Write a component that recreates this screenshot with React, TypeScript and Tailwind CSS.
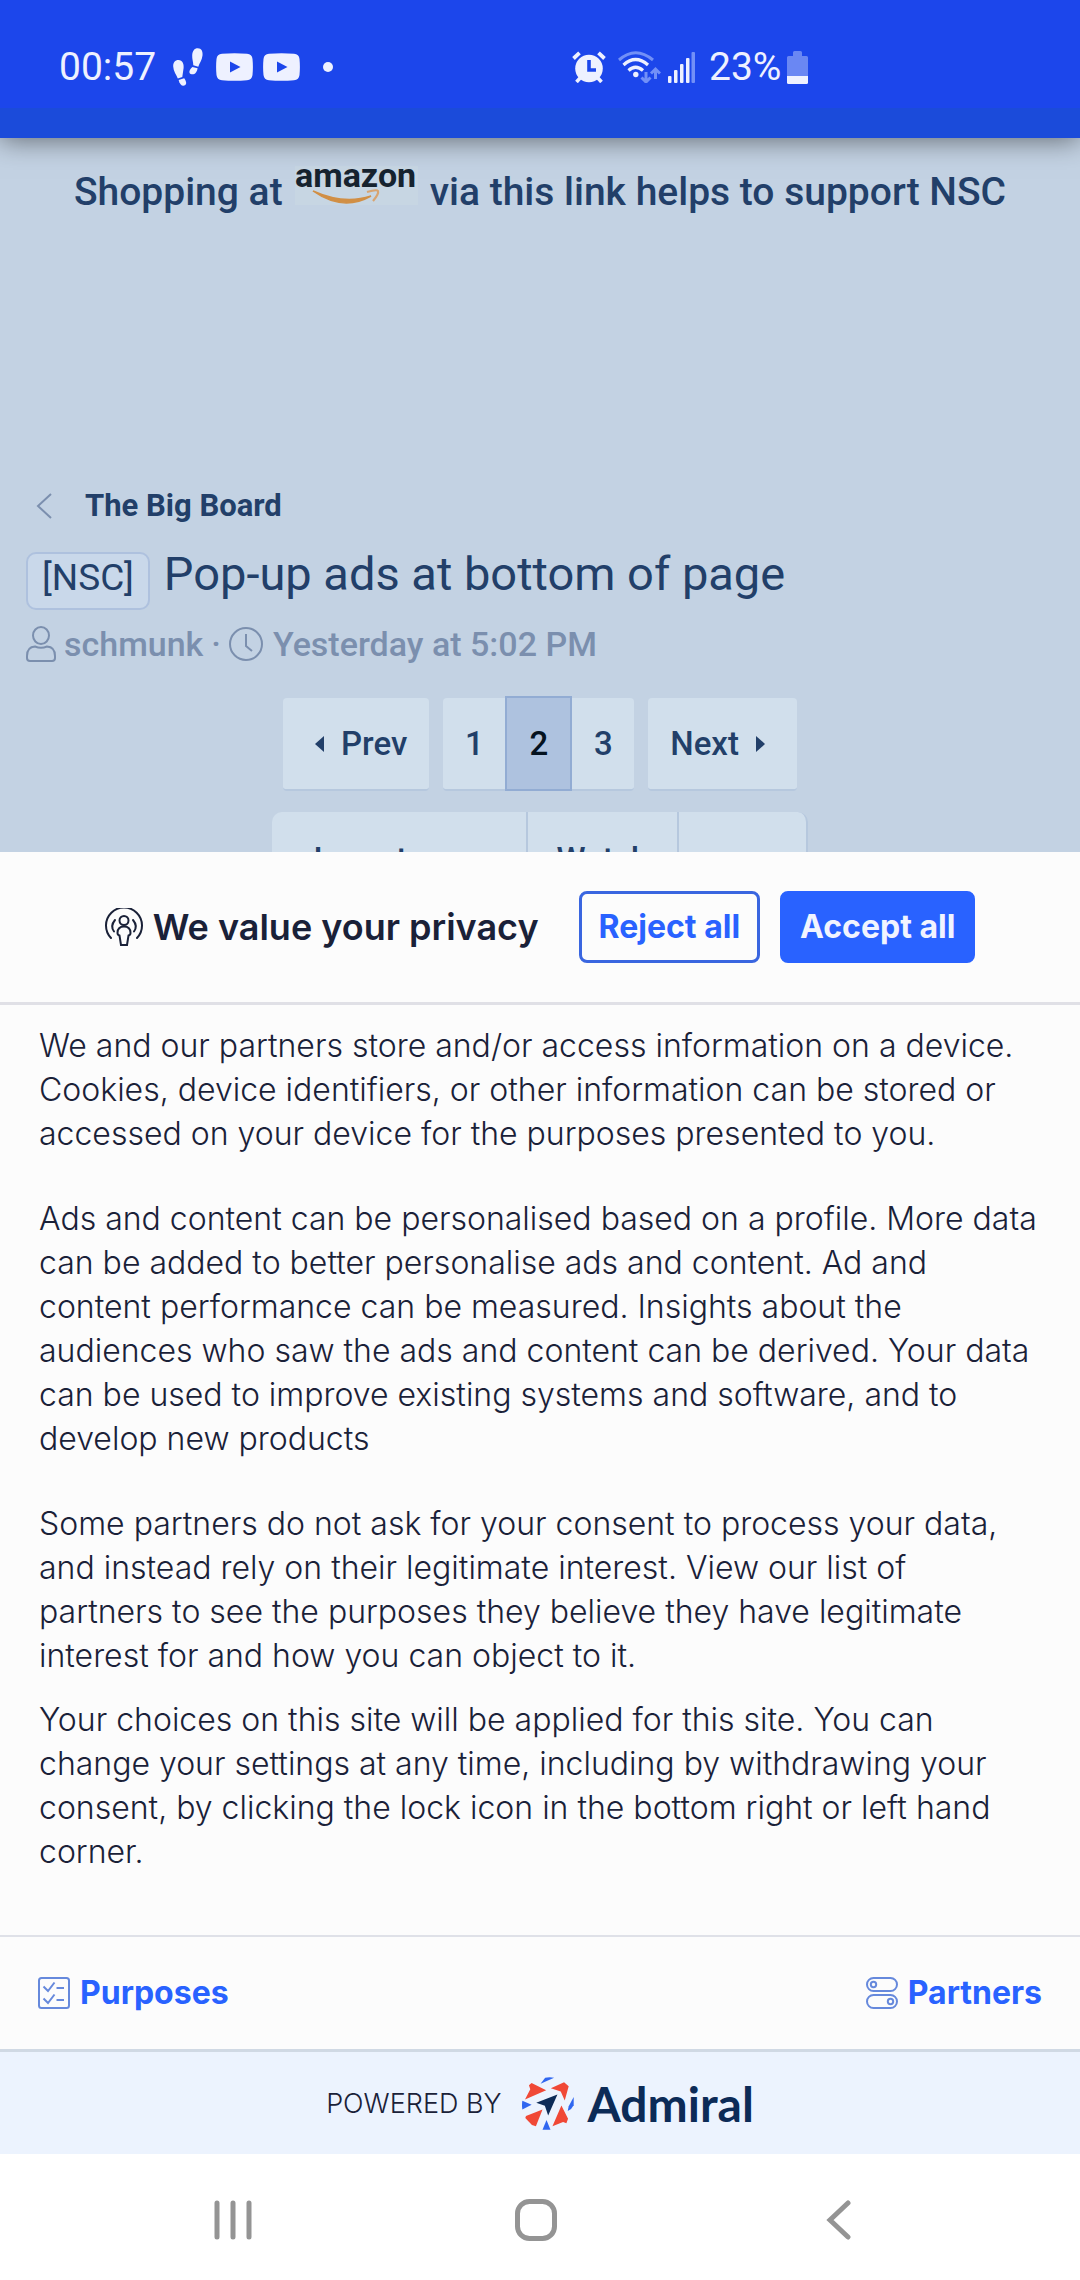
import type { ReactNode } from "react";

const paragraphs = [
  {
    text: "We and our partners store and/or access information on a device. Cookies, device identifiers, or other information can be stored or accessed on your device for the purposes presented to you.",
    gap: "mb-[41px]",
  },
  {
    text: "Ads and content can be personalised based on a profile. More data can be added to better personalise ads and content. Ad and content performance can be measured. Insights about the audiences who saw the ads and content can be derived. Your data can be used to improve existing systems and software, and to develop new products",
    gap: "mb-[41px]",
  },
  {
    text: "Some partners do not ask for your consent to process your data, and instead rely on their legitimate interest. View our list of partners to see the purposes they believe they have legitimate interest for and how you can object to it.",
    gap: "mb-5",
  },
  {
    text: "Your choices on this site will be applied for this site. You can change your settings at any time, including by withdrawing your consent, by clicking the lock icon in the bottom right or left hand corner.",
    gap: "",
  },
];

function VideoIcon() {
  return (
    <svg className="w-[37px] h-7" viewBox="0 0 37 28" fill="none">
      <path d="M6 .8Q18.500-.4 31 .8Q36 1.200 36.500 6Q37.300 14 36.500 22Q36 26.800 31 27.200Q18.500 28.400 6 27.200Q1 26.800.5 22Q-.3 14 .5 6Q1 1.200 6 .8z" fill="#eef1ff" />
      <path d="M14 8.500v11l10.500-5.500z" fill="#1c46eb" />
    </svg>
  );
}

function StatusBar() {
  return (
    <div className="grid grid-cols-2 items-center pt-[45px] pb-[19px] bg-[#1c46eb] text-[#eef1ff] text-[39px] leading-11">
      <div className="flex items-center pl-[59px]">
        <span>00:57</span>
        <svg className="w-[30px] h-[38px] ml-[17px]" viewBox="0 0 30 38" fill="#eef1ff">
          <path d="M5.500 12C9.500 12 11 16 10.600 20C10.300 23 9.600 26 9.300 29L4.800 30.600C3.500 27 .3 23 .2 18.500C.1 14.500 2 12 5.500 12z" />
          <path d="M5.600 32L11.200 30.300C13 33 14 35.500 12.300 37C10 38.700 6.800 37.500 5.600 32z" />
          <path d="M24.800.3C28.500.3 30 3.500 29.500 7.500C29 12 26.500 15 25.300 18.700L20.300 17.300C20.300 14 19 11 19.200 7.500C19.400 3 21.300.3 24.800.3z" />
          <path d="M19.400 18.900L24.600 20.300C24 24.500 21.700 26.700 18.700 26.300C15.500 25.800 15.500 22.500 19.400 18.900z" />
        </svg>
        <div className="flex gap-2.5 ml-[13px]">
          <VideoIcon />
          <VideoIcon />
        </div>
        <span className="w-2.5 h-2.5 ml-[23px] rounded-full bg-[#eef1ff]" />
      </div>

      <div className="flex items-center pl-8">
        <svg className="w-[34px] h-8" viewBox="0 0 34 32">
          <g stroke="#eef1ff" fill="none">
            <path d="M1.500 7.500L7.500 1.800M32.500 7.500L26.500 1.800" strokeWidth="3.800" />
            <path d="M4.500 31L9 26M29.500 31L25 26" strokeWidth="3.600" />
          </g>
          <circle cx="17" cy="17.500" r="13.800" fill="#eef1ff" />
          <path d="M17 9v10h7" fill="none" stroke="#1c46eb" strokeWidth="3.600" />
        </svg>
        <svg className="w-[43px] h-8 ml-3" viewBox="0 0 43 32" fill="none">
          <g stroke="#7290f7" strokeWidth="3">
            <path d="M1 9Q17.500-5.500 35 9" />
            <path d="M28 21v10M23.500 26.500L28 31l4.500-4.500" />
            <path d="M37.500 28V18M33 22.500l4.500-4.500l4.500 4.500" />
          </g>
          <path d="M5.500 14Q17.500 3 30 14M10.500 19.500Q17.500 13 25 19.500" stroke="#eef1ff" strokeWidth="3.200" />
          <circle cx="17.800" cy="23.500" r="2.700" fill="#eef1ff" />
        </svg>
        <svg className="w-[27px] h-8 ml-[7px]" viewBox="0 0 27 32">
          <g fill="#eef1ff">
            <rect y="25" width="3.500" height="7" rx="1" />
            <rect x="6" y="19" width="3.500" height="13" rx="1" />
            <rect x="12" y="13" width="3.500" height="19" rx="1" />
            <rect x="18" y="7" width="3.500" height="25" rx="1" />
          </g>
          <rect x="23.500" y="1" width="3.500" height="31" rx="1" fill="#7290f7" />
        </svg>
        <span className="ml-3.5">23%</span>
        <svg className="w-[21px] h-[33px] ml-1.5" viewBox="0 0 21 33">
          <path d="M6 5V1.500Q6 0 7.500 0h6Q15 0 15 1.500V5h4.500Q21 5 21 6.500V25H0V6.500Q0 5 1.500 5z" fill="#6a87f3" />
          <path d="M0 25h21v6.500Q21 33 19.500 33h-18Q0 33 0 31.500z" fill="#eef1ff" />
        </svg>
      </div>
    </div>
  );
}

function AmazonLogo() {
  return (
    <svg className="inline-block w-[123px] h-[39px] mx-3 overflow-visible bg-[#c7d6e3] align-baseline" viewBox="0 0 123 39" role="img" aria-label="amazon">
      <text x="0" y="21" fontFamily="Roboto" fontWeight="700" fontSize="34" fill="#16232f">amazon</text>
      <path d="M18 25Q48 46 76 30Q49 39 18 25z" fill="#d18f45" stroke="#d18f45" strokeWidth="1.500" />
      <path d="M72 26Q82 23 83 25Q84 28 78 35" fill="none" stroke="#d8a470" strokeWidth="2.200" />
    </svg>
  );
}

function PageButton({ children, className }: { children: ReactNode; className: string }) {
  return (
    <a href="#" className={`flex items-center h-[93px] border-b-2 border-[#b6c8de] bg-[#d1dfec] ${className}`}>
      {children}
    </a>
  );
}

function Thread() {
  return (
    <main className="bg-[#c3d2e3] text-[#223f69] font-medium">
      <p className="pt-7 text-center text-[39px] leading-13 whitespace-nowrap">
        Shopping at<AmazonLogo />via this link helps to support NSC
      </p>

      <div className="pt-[266px] px-[26px]">
        <a href="#" className="flex items-center pl-2.5 text-[31px] leading-11 font-bold">
          <svg className="w-4 h-[26px] mr-[33px]" viewBox="0 0 16 26" fill="none" stroke="#7b8fae" strokeWidth="2">
            <path d="M15 1L2 13L15 25" />
          </svg>
          The Big Board
        </a>

        <h1 className="flex items-baseline gap-3.5 mt-3.5 text-[47px] leading-16 font-normal">
          <span className="px-3.5 pb-1.5 rounded-[10px] border-2 border-[#aec1de] bg-[#c9d8ea] text-[37px] leading-12">[NSC]</span>
          Pop-up ads at bottom of page
        </h1>

        <div className="flex items-center mt-3.5 text-[34px] leading-10 text-[#7b8fae]">
          <svg className="w-[30px] h-9 mr-2" viewBox="0 0 30 36" fill="none" stroke="currentColor" strokeWidth="2">
            <ellipse cx="15" cy="9.500" rx="8" ry="8.500" />
            <path d="M9 20.500Q15 23 21 20.500Q29 21 29 30V32Q29 35 26 35H4Q1 35 1 32V30Q1 21 9 20.500z" />
          </svg>
          schmunk
          <span className="mx-2">·</span>
          <svg className="w-[34px] h-[34px] mr-2.5" viewBox="0 0 34 34" fill="none" stroke="currentColor" strokeWidth="2">
            <circle cx="17" cy="17" r="16" />
            <path d="M17 7v12l6 5" />
          </svg>
          Yesterday at 5:02 PM
        </div>
      </div>

      <nav className="flex justify-center gap-3.5 mt-[34px] text-[33px] leading-10" aria-label="Pages">
        <PageButton className="rounded pl-8 pr-[22px] gap-[17px]">
          <svg className="w-[9px] h-4" viewBox="0 0 9 16" fill="currentColor"><path d="M9 0v16L0 8z" /></svg>
          Prev
        </PageButton>
        <div className="flex">
          <PageButton className="rounded-l w-[62px] justify-center">1</PageButton>
          <a href="#" aria-current="page" className="flex items-center justify-center w-[67px] h-[95px] -mt-0.5 border-2 border-[#92acd3] bg-[#aec2df] text-[#05121f]">2</a>
          <PageButton className="rounded-r w-[62px] justify-center">3</PageButton>
        </div>
        <PageButton className="rounded pl-[22px] pr-8 gap-[17px]">
          Next
          <svg className="w-[9px] h-4" viewBox="0 0 9 16" fill="currentColor"><path d="M0 0v16l9-8z" /></svg>
        </PageButton>
      </nav>

      <div className="flex w-fit mx-auto mt-[21px] rounded-[10px] border-r-2 border-[#b6c8de] bg-[#d1dfec] text-[33px] leading-10">
        <button type="button" className="px-8 py-7 font-medium">Jump to new</button>
        <button type="button" className="px-7 py-7 border-l-2 border-[#b6c8de] font-medium">Watch</button>
        <button type="button" className="px-[46px] py-7 border-l-2 border-[#b6c8de] font-medium">•••</button>
      </div>
    </main>
  );
}

function AdmiralMark() {
  return (
    <svg className="w-[52px] h-[53px]" viewBox="0 0 157 160">
      <g fill="#f04836">
        <path d="M21 25L29 18L73 40L9 68L25 37z" />
        <path d="M87 34L127 16L141 28L137 42L129 71L117 44z" />
        <path d="M119 86L139 126L134 140L124 136L92 149z" />
        <path d="M62 98L42 149L30 145L10 124L12 118z" />
      </g>
      <g fill="#2f66f0">
        <path d="M56 20L70 2Q82-1 97 2z" />
        <path d="M1 72L29 84L1 98Q-1 85 1 72z" />
        <path d="M156 60V85Q150 98 138 103L141 88z" />
        <path d="M74 130L86 159H62z" />
      </g>
      <path d="M107 53L43 78L69 87L79 116z" fill="#0c2b57" />
    </svg>
  );
}

function PrivacySheet() {
  return (
    <section className="relative -mt-14 bg-[#fcfcfc] text-[#1a2138] font-[Inter,sans-serif]" aria-labelledby="privacy-title">
      <header className="flex items-center justify-center py-[39px] border-b-3 border-[#e0e0e6]">
        <svg className="w-[38px] h-[38px] mr-2.5" viewBox="0 0 38 38" fill="none" stroke="currentColor" strokeWidth="2" strokeLinecap="round">
          <path d="M6 30A18 18 0 1 1 32 30" />
          <path d="M10 12Q5 18 9 23.500M28 12Q33 18 29 23.500" />
          <circle cx="19" cy="12.500" r="4.500" />
          <path d="M19 18.500Q25.500 18.500 25.500 25Q25.500 27 23.500 27.500L22 37H16L14.500 27.500Q12.500 27 12.500 25Q12.500 18.500 19 18.500z" />
        </svg>
        <h2 id="privacy-title" className="text-[36px] leading-12 font-semibold">We value your privacy</h2>
        <button type="button" className="ml-10 px-[17px] py-[13px] rounded-lg border-3 border-[#3a66e0] text-[#2962ff] text-[32px] leading-10 font-bold">
          Reject all
        </button>
        <button type="button" className="ml-5 px-[17px] py-[13px] rounded-lg border-3 border-[#2962ff] bg-[#2962ff] text-[#f1f4ff] text-[32px] leading-10 font-bold">
          Accept all
        </button>
      </header>

      <div className="pl-[39px] pr-[42px] pt-[19px] pb-[61px] text-[32px] leading-11 font-light">
        {paragraphs.map((p) => (
          <p key={p.text} className={p.gap}>{p.text}</p>
        ))}
      </div>

      <div className="flex justify-between px-[38px] py-8 border-t-2 border-[#dfe1e8] text-[32px] leading-12 font-bold text-[#2962ff]">
        <a href="#" className="flex items-center gap-2.5">
          <svg className="w-8 h-8" viewBox="0 0 32 32" fill="none" stroke="#6689dc" strokeWidth="2">
            <rect x="1" y="1" width="30" height="30" rx="2.500" />
            <path d="M5.500 9.500L10 14L16.500 5.500M5.500 21.500L10 26L16.500 17.500M18.500 11H26M18.500 23H26" />
          </svg>
          Purposes
        </a>
        <a href="#" className="flex items-center gap-2.5">
          <svg className="w-8 h-8" viewBox="0 0 32 32" fill="none" stroke="#6689dc" strokeWidth="2">
            <rect x="1" y="1" width="30" height="13" rx="6.500" />
            <rect x="1" y="18" width="30" height="13" rx="6.500" />
            <circle cx="7.500" cy="7.500" r="2.700" />
            <circle cx="24.500" cy="24.500" r="2.700" />
          </svg>
          Partners
        </a>
      </div>

      <div className="flex items-center justify-center pt-[25px] pb-6 border-t-3 border-[#d0d9e4] bg-[#ecf3fe]">
        <span className="mr-5 text-[27px] leading-10 font-light">POWERED BY</span>
        <AdmiralMark />
        <span className="ml-3.5 text-[48px] leading-[53px] font-bold text-[#0c2b57] font-[Lato,sans-serif]">Admiral</span>
      </div>
    </section>
  );
}

function SystemNav() {
  return (
    <nav className="flex items-center justify-between pl-53 pr-55 py-[45px] bg-white text-[#949494]" aria-label="System">
      <button type="button" aria-label="Recents">
        <svg className="w-[42px] h-10" viewBox="0 0 42 40" stroke="currentColor" strokeWidth="5" strokeLinecap="round">
          <path d="M5 3v34M21 3v34M37 3v34" />
        </svg>
      </button>
      <button type="button" aria-label="Home">
        <svg className="w-[42px] h-[42px]" viewBox="0 0 42 42" fill="none" stroke="currentColor" strokeWidth="5">
          <rect x="2.500" y="2.500" width="37" height="37" rx="12" />
        </svg>
      </button>
      <button type="button" aria-label="Back">
        <svg className="w-[42px] h-10" viewBox="0 0 42 40" fill="none" stroke="currentColor" strokeWidth="5" strokeLinecap="round">
          <path d="M30 3L12 20L30 37" />
        </svg>
      </button>
    </nav>
  );
}

export default function App() {
  return (
    <div className="w-full overflow-hidden font-[Roboto,sans-serif]">
      <header className="relative shadow-[0_2px_26px_rgba(0,0,0,0.5)]">
        <StatusBar />
        <div className="h-[30px] bg-[#1b4bda]" />
      </header>
      <Thread />
      <PrivacySheet />
      <SystemNav />
    </div>
  );
}
